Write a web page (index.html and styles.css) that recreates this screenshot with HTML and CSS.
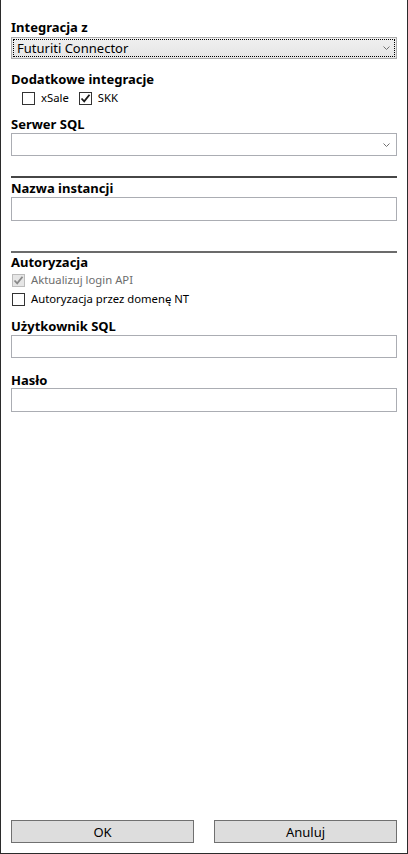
FILE: index.html
```html
<!DOCTYPE html>
<html lang="pl">
<head>
  <meta charset="UTF-8">
  <title>Integracja</title>
  <link rel="stylesheet" href="styles.css">
</head>
<body>
  <form class="window" id="settingsForm">
    <!-- Integration source -->
    <label class="caption first">Integracja z</label>
    <div class="combo focused">
      <span class="focus-rect"></span>
      <span class="combo-text">Futuriti Connector</span>
      <svg class="chevron" width="7" height="4" viewBox="0 0 7 4"><polyline points="0.5,0.5 3.5,3.5 6.5,0.5" fill="none" stroke="#707070" stroke-width="1"/></svg>
    </div>

    <label class="caption extra">Dodatkowe integracje</label>
    <div class="check-line inline">
      <span class="check"><span class="box"></span>xSale</span>
      <span class="check"><span class="box"><svg width="11" height="11" viewBox="0 0 11 11"><polyline points="1.5,5.5 4.2,8.3 9.5,1.8" fill="none" stroke="#1a1a1a" stroke-width="1.8"/></svg></span>SKK</span>
    </div>

    <!-- SQL server -->
    <label class="caption server">Serwer SQL</label>
    <div class="combo plain">
      <span class="combo-text"></span>
      <svg class="chevron" width="7" height="4" viewBox="0 0 7 4"><polyline points="0.5,0.5 3.5,3.5 6.5,0.5" fill="none" stroke="#707070" stroke-width="1"/></svg>
    </div>

    <hr class="sep dark">
    <label class="caption after-sep">Nazwa instancji</label>
    <input class="text-box tall" type="text" name="instance">

    <hr class="sep light">
    <label class="caption auth">Autoryzacja</label>
    <div class="check-line first-opt">
      <span class="check disabled"><span class="box"><svg width="11" height="11" viewBox="0 0 11 11"><polyline points="1.5,5.5 4.2,8.3 9.5,1.8" fill="none" stroke="#8a8a8a" stroke-width="1.8"/></svg></span>Aktualizuj login API</span>
    </div>
    <div class="check-line second-opt">
      <span class="check"><span class="box"></span>Autoryzacja przez domenę NT</span>
    </div>

    <label class="caption user">Użytkownik SQL</label>
    <input class="text-box" type="text" name="user">

    <label class="caption pass">Hasło</label>
    <input class="text-box tall flush" type="password" name="password">

    <div class="buttons">
      <button type="submit">OK</button>
      <button type="button">Anuluj</button>
    </div>
  </form>
</body>
</html>
```

FILE: styles.css
```css
html, body {
  margin: 0;
  background: #ffffff;
}

body {
  font-family: "Noto Sans", "Open Sans", sans-serif;
  font-size: 13px;
  color: #000000;
}

.window {
  box-sizing: border-box;
  height: 854px;
  display: flex;
  flex-direction: column;
  padding: 19px 10px 10px;
  border-left: 1px solid #2b2b2b;
  border-right: 1px solid #2b2b2b;
  border-bottom: 1px solid #2b2b2b;
}

.caption {
  display: block;
  font-weight: bold;
  line-height: 16px;
  height: 16px;
  margin-bottom: 1px;
}

.caption.first { margin-bottom: 2px; }
.caption.extra { margin-top: 12px; margin-bottom: 0; }
.caption.server { margin-top: 10px; }
.caption.after-sep { margin-top: 2px; }
.caption.auth { margin-top: 1px; margin-bottom: 0; }
.caption.user { margin-top: 11px; }
.caption.pass { margin-top: 14px; margin-bottom: 0; }

/* combo boxes */
.combo {
  position: relative;
  box-sizing: border-box;
  height: 23px;
  border: 1px solid #acacac;
  display: flex;
  align-items: center;
  padding-left: 5px;
}

.combo.focused {
  height: 22px;
  background: linear-gradient(#f0f0f0, #e5e5e5);
}

.combo.plain {
  background: #ffffff;
  border-color: #abadb3;
}

.focus-rect {
  position: absolute;
  top: 1px;
  left: 1px;
  right: 1px;
  bottom: 1px;
  border: 1px dotted #000000;
}

.combo-text {
  flex: 1;
  line-height: 16px;
}

.chevron {
  margin-right: 6px;
}

/* separators */
.sep {
  margin: 0;
  border: none;
  height: 2px;
}

.sep.dark {
  margin-top: 20px;
  background: #464646;
}

.sep.light {
  margin-top: 30px;
  background: #6b6b6b;
}

/* text boxes */
.text-box {
  box-sizing: border-box;
  display: block;
  width: 100%;
  height: 23px;
  margin: 0;
  padding: 0 3px;
  border: 1px solid #abadb3;
  font: inherit;
  outline: none;
}

.text-box.tall { height: 24px; }

/* checkboxes */
.check-line {
  display: flex;
  height: 16px;
  align-items: center;
  font-size: 11.3px;
}

.check-line.inline {
  margin-top: 3px;
  padding-left: 11px;
  gap: 10px;
}

.check-line.first-opt { margin-top: 2px; padding-left: 1px; }
.check-line.second-opt { margin-top: 3px; padding-left: 1px; }

.check {
  display: flex;
  align-items: center;
  gap: 6px;
  line-height: 16px;
}

.box {
  box-sizing: border-box;
  width: 13px;
  height: 13px;
  border: 1px solid #333333;
  background: #ffffff;
  display: flex;
  align-items: center;
  justify-content: center;
}

.check.disabled {
  color: #6d6d6d;
}

.check.disabled .box {
  border-color: #bcbcbc;
  background: #e6e6e6;
}

/* dialog buttons */
.buttons {
  margin-top: auto;
  display: flex;
  gap: 20px;
}

.buttons button {
  flex: 1;
  height: 23px;
  border: 1px solid #707070;
  background: #dddddd;
  font: inherit;
  color: #000000;
  padding: 0;
}
```
